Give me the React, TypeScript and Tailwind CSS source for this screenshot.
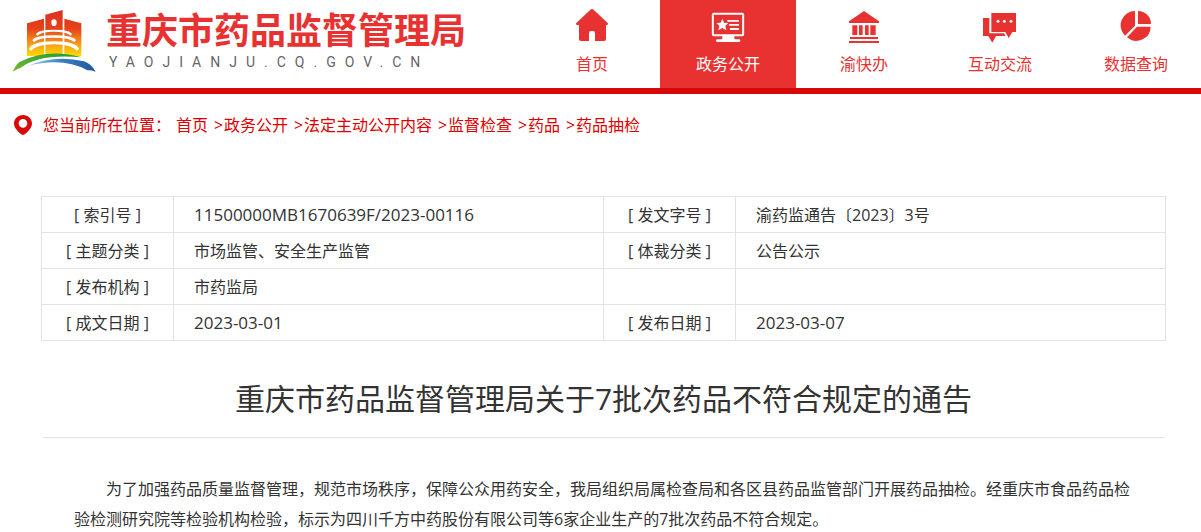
import React from 'react';
import type { ReactNode } from 'react';

const HomeIcon = () => (
  <svg viewBox="0 0 102 102" className="size-[34px]" fill="currentColor" aria-hidden="true">
    <path d="M47 1.500Q51-1.500 55 1.500L98 42Q101 47 96 48H93V90Q93 96 87 96H60V72Q60 66 54 66H48Q42 66 42 72V96H18Q12 96 12 90V48H6Q1 47 4 42Z" />
  </svg>
);

const MonitorIcon = () => (
  <svg viewBox="0 0 102 102" className="size-[34px]" fill="currentColor" aria-hidden="true">
    <rect x="5.500" y="14.500" width="91" height="64" rx="3" fill="none" stroke="currentColor" strokeWidth="6" />
    <path d="M34 80h36v8q0 3 4 3h10q4 0 4 4t-4 4H19q-4 0-4-4t4-4h11q4 0 4-3Z" />
    <path d="M34 29l5 12 13 1-9 9 3 13-12-7-12 7 3-13-9-9 13-1Z" />
    <path d="M48 33h36v5H50ZM54 45h30v5H54ZM57 57h27v6H57Z" />
  </svg>
);

const BankIcon = () => (
  <svg viewBox="0 0 102 102" className="size-[34px]" fill="currentColor" aria-hidden="true">
    <path d="M51 6L96 37V42H6V37Z" />
    <path d="M16 49h15v29H16ZM36 49h11v29H36ZM54 49h11v29H54ZM70 49h16v29H70Z" />
    <path d="M9 84h84v6H9ZM6 96h90v6H6Z" />
  </svg>
);

const ChatIcon = () => (
  <svg viewBox="0 0 102 102" className="size-[34px]" fill="currentColor" aria-hidden="true">
    <path d="M0 27h19v46h44l5 8H39L28 101 16 81H0Z" />
    <path d="M25 12h74v57H88L77 87 67 69H25Z" />
    <g className="fill-white">
      <circle cx="45" cy="37" r="4.500" />
      <circle cx="64" cy="37" r="4.500" />
      <circle cx="84" cy="37" r="4.500" />
    </g>
  </svg>
);

const PieIcon = () => (
  <svg viewBox="0 0 102 102" className="size-[34px]" fill="currentColor" aria-hidden="true">
    <path d="M57 6A39 39 0 0 1 96 45H57Z" />
    <path d="M48 6V50L18 80A43 43 0 0 1 48 6Z" />
    <path d="M54 53H95A43 43 0 0 1 24 85Z" />
  </svg>
);

const PinIcon = () => (
  <svg viewBox="0 0 54 60" className="h-5 w-[18px] text-[#d90808]" fill="currentColor" aria-hidden="true">
    <path
      fillRule="evenodd"
      d="M27 0C42 0 54 11 54 26C54 39 40 51 32 58Q27 62 22 58C14 51 0 39 0 26C0 11 12 0 27 0ZM27 12A13 13 0 1 0 27 38A13 13 0 1 0 27 12Z"
    />
  </svg>
);

const Logo = () => (
  <svg viewBox="36 27 252 192" className="h-16 w-[84px] shrink-0" role="img" aria-label="重庆市药品监督管理局">
    <defs>
      <linearGradient id="tower" gradientUnits="userSpaceOnUse" x1="0" y1="31" x2="0" y2="168">
        <stop offset="0" stopColor="#dc3020" />
        <stop offset="0.400" stopColor="#e6421a" />
        <stop offset="0.700" stopColor="#f6921c" />
        <stop offset="1" stopColor="#ffdc00" />
      </linearGradient>
      <linearGradient id="hill" x1="0" y1="1" x2="1" y2="0">
        <stop offset="0" stopColor="#79b92c" />
        <stop offset="1" stopColor="#1d9a3c" />
      </linearGradient>
      <linearGradient id="river" x1="0" y1="0" x2="1" y2="0">
        <stop offset="0" stopColor="#9fd0ee" />
        <stop offset="0.500" stopColor="#3b7fc4" />
        <stop offset="1" stopColor="#1f55a0" />
      </linearGradient>
    </defs>
    <path d="M81 70L132 56V168H81ZM136 44L188 30V168H136ZM193 56L244 70V168H193Z" fill="url(#tower)" />
    <g className="fill-white">
      <ellipse cx="162" cy="68" rx="8" ry="10" />
      <path d="M108 103Q112 89 162 89Q212 89 216 103L212 107Q200 95 162 95Q124 95 112 107Z" />
      <path d="M97 121Q105 106 162 106Q220 106 228 121L223 126Q209 113 162 113Q116 113 102 126Z" />
      <path d="M87 147Q96 124 162 124Q228 124 237 147L231 153Q214 133 162 133Q110 133 93 153Z" />
    </g>
    <path d="M38 215Q48 192 60 185Q145 144 246 172Q120 160 62 203Q50 207 38 215Z" fill="url(#hill)" />
    <path d="M82 198Q165 163 252 184Q272 190 287 215Q272 210 262 211Q190 171 82 198Z" fill="url(#river)" />
  </svg>
);

interface NavItem {
  name: string;
  icon: ReactNode;
  active?: boolean;
}

const navItems: NavItem[] = [
  { name: '首页', icon: <HomeIcon /> },
  { name: '政务公开', icon: <MonitorIcon />, active: true },
  { name: '渝快办', icon: <BankIcon /> },
  { name: '互动交流', icon: <ChatIcon /> },
  { name: '数据查询', icon: <PieIcon /> },
];

const crumbs = ['首页', '政务公开', '法定主动公开内容', '监督检查', '药品', '药品抽检'];

const rows = [
  ['[ 索引号 ]', '11500000MB1670639F/2023-00116', '[ 发文字号 ]', '渝药监通告〔2023〕3号'],
  ['[ 主题分类 ]', '市场监管、安全生产监管', '[ 体裁分类 ]', '公告公示'],
  ['[ 发布机构 ]', '市药监局', '', ''],
  ['[ 成文日期 ]', '2023-03-01', '[ 发布日期 ]', '2023-03-07'],
];

const Header = () => (
  <header className="flex justify-between overflow-hidden border-b-6 border-[#d90808]">
    <a href="#" className="flex shrink-0 gap-[10px] pt-[9px] pl-3">
      <Logo />
      <span className="flex flex-col">
        <span className="text-4xl leading-[44px] font-bold text-[#e83232]">重庆市药品监督管理局</span>
        <span className="pl-[3px] font-[Roboto,sans-serif] text-sm leading-[18px] tracking-[9px] text-[#666]">
          YAOJIANJU.CQ.GOV.CN
        </span>
      </span>
    </a>
    <nav className="-mr-[3px] flex shrink-0">
      {navItems.map((item) => (
        <a
          key={item.name}
          href="#"
          className={`flex h-[88px] w-[136px] flex-col items-center gap-[9px] pt-[9px] ${
            item.active ? 'bg-[#e83232] text-white' : 'text-[#e83232]'
          }`}
        >
          {item.icon}
          <span>{item.name}</span>
        </a>
      ))}
    </nav>
  </header>
);

const Breadcrumb = () => (
  <nav className="flex items-center pt-[19px] pl-[14px] leading-6 text-[#d00]">
    <PinIcon />
    <span className="pr-[5px] pl-[11px]">您当前所在位置：</span>
    <ol className="flex">
      {crumbs.map((name, i) => (
        <li key={name} className="flex">
          {i > 0 && <span className="w-4 pr-px text-right">&gt;</span>}
          <a href="#">{name}</a>
        </li>
      ))}
    </ol>
  </nav>
);

// 纯数字、字母的内容字号稍大
const isLatin = (text: string) => /^[\w/-]+$/.test(text);

const InfoTable = () => (
  <table className="w-full table-fixed border-collapse">
    <colgroup>
      <col className="w-[132px]" />
      <col />
      <col className="w-[132px]" />
      <col />
    </colgroup>
    <tbody>
      {rows.map((row) => (
        <tr key={row[0]} className="h-9">
          {row.map((cell, i) =>
            i % 2 === 0 ? (
              <th key={i} scope="row" className="border border-[#e3e3e3] font-normal">
                {cell}
              </th>
            ) : (
              <td
                key={i}
                className={`border border-[#e3e3e3] px-5 ${isLatin(cell) ? 'text-[17px]' : 'text-base'}`}
              >
                {cell}
              </td>
            )
          )}
        </tr>
      ))}
    </tbody>
  </table>
);

const App = () => {
  return (
    <div lang="zh-CN" className="bg-white font-['Open_Sans','Noto_Sans_CJK_SC',sans-serif] text-base text-[#333]">
      <Header />
      <Breadcrumb />
      <main className="pt-[59px] pr-[35px] pl-[41px]">
        <InfoTable />
        <article className="px-[2px]">
          <h1 className="border-b border-[#e3e3e3] pt-9 pb-4 text-center text-3xl leading-[44px]">
            重庆市药品监督管理局关于7批次药品不符合规定的通告
          </h1>
          <p className="px-[31px] pt-9 indent-8 leading-[30px]">
            为了加强药品质量监督管理，规范市场秩序，保障公众用药安全，我局组织局属检查局和各区县药品监管部门开展药品抽检。经重庆市食品药品检验检测研究院等检验机构检验，标示为四川千方中药股份有限公司等6家企业生产的7批次药品不符合规定。
          </p>
        </article>
      </main>
    </div>
  );
};

export default App;
